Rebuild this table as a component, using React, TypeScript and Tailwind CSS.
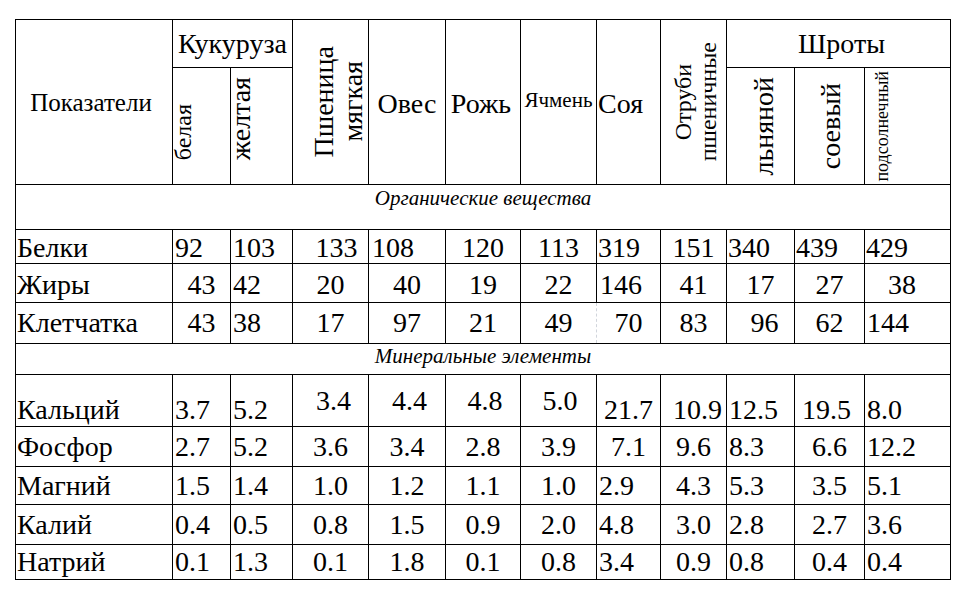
const B = "border border-black p-0";
const L = "justify-start pl-[2px]";
const C = "justify-center";

type Cell = { v: string; j: string; va?: string; td?: string };
type Row = { label: string; h: string; pad?: string; va: string; cells: Cell[] };

const colWidths = [
	"w-[157px]",
	"w-[58px]",
	"w-[62px]",
	"w-[76px]",
	"w-[77px]",
	"w-[75px]",
	"w-[76px]",
	"w-[64px]",
	"w-[66px]",
	"w-[68px]",
	"w-[70px]",
	"w-[86px]",
];

const organic: Row[] = [
	{
		label: "Белки",
		h: "h-[33px]",
		pad: "pt-[3px]",
		va: "items-center",
		cells: [
			{ v: "92", j: L },
			{ v: "103", j: L },
			{ v: "133", j: "justify-center pl-[12px]" },
			{ v: "108", j: "justify-start pl-[3px]" },
			{ v: "120", j: C },
			{ v: "113", j: C },
			{ v: "319", j: "justify-start pl-[1px]" },
			{ v: "151", j: C },
			{ v: "340", j: "justify-start pl-[1px]" },
			{ v: "439", j: "justify-start pl-[1px]" },
			{ v: "429", j: "justify-start pl-[1px]" },
		],
	},
	{
		label: "Жиры",
		h: "h-[38px]",
		pad: "pt-[4px]",
		va: "items-center",
		cells: [
			{ v: "43", j: C },
			{ v: "42", j: L },
			{ v: "20", j: C },
			{ v: "40", j: C },
			{ v: "19", j: C },
			{ v: "22", j: C },
			{ v: "146", j: "justify-start pl-[3px]" },
			{ v: "41", j: C },
			{ v: "17", j: C },
			{ v: "27", j: C },
			{ v: "38", j: "justify-start pl-[23px]" },
		],
	},
	{
		label: "Клетчатка",
		h: "h-[40px]",
		va: "items-center",
		cells: [
			{ v: "43", j: C },
			{ v: "38", j: L },
			{ v: "17", j: C },
			{ v: "97", j: C },
			{ v: "21", j: C },
			{ v: "49", j: C, td: "border-r-0" },
			{ v: "70", j: C, td: "[border-left-style:dashed] border-l-gray-300" },
			{ v: "83", j: C },
			{ v: "96", j: "justify-center pl-[8px]" },
			{ v: "62", j: C },
			{ v: "144", j: L },
		],
	},
];

const minerals: Row[] = [
	{
		label: "Кальций",
		h: "h-[51px]",
		va: "items-end",
		cells: [
			{ v: "3.7", j: L },
			{ v: "5.2", j: L },
			{ v: "3.4", j: "justify-center pl-[6px]", va: "items-center" },
			{ v: "4.4", j: "justify-center pl-[5px]", va: "items-center" },
			{ v: "4.8", j: "justify-center pl-[4px]", va: "items-center" },
			{ v: "5.0", j: "justify-center pl-[3px]", va: "items-center" },
			{ v: "21.7", j: C },
			{ v: "10.9", j: "justify-end pr-[4px]" },
			{ v: "12.5", j: L },
			{ v: "19.5", j: "justify-end pr-[13px]" },
			{ v: "8.0", j: L },
		],
	},
	{
		label: "Фосфор",
		h: "h-[39px]",
		va: "items-center",
		cells: [
			{ v: "2.7", j: L },
			{ v: "5.2", j: L },
			{ v: "3.6", j: C },
			{ v: "3.4", j: C },
			{ v: "2.8", j: C },
			{ v: "3.9", j: C },
			{ v: "7.1", j: C },
			{ v: "9.6", j: C },
			{ v: "8.3", j: L },
			{ v: "6.6", j: C },
			{ v: "12.2", j: L },
		],
	},
	{
		label: "Магний",
		h: "h-[37px]",
		va: "items-center",
		cells: [
			{ v: "1.5", j: L },
			{ v: "1.4", j: L },
			{ v: "1.0", j: C },
			{ v: "1.2", j: C },
			{ v: "1.1", j: C },
			{ v: "1.0", j: C },
			{ v: "2.9", j: L },
			{ v: "4.3", j: C },
			{ v: "5.3", j: L },
			{ v: "3.5", j: C },
			{ v: "5.1", j: L },
		],
	},
	{
		label: "Калий",
		h: "h-[39px]",
		va: "items-center",
		cells: [
			{ v: "0.4", j: L },
			{ v: "0.5", j: L },
			{ v: "0.8", j: C },
			{ v: "1.5", j: C },
			{ v: "0.9", j: C },
			{ v: "2.0", j: C },
			{ v: "4.8", j: L },
			{ v: "3.0", j: C },
			{ v: "2.8", j: L },
			{ v: "2.7", j: C },
			{ v: "3.6", j: L },
		],
	},
	{
		label: "Натрий",
		h: "h-[34px]",
		va: "items-center",
		cells: [
			{ v: "0.1", j: L },
			{ v: "1.3", j: L },
			{ v: "0.1", j: C },
			{ v: "1.8", j: C },
			{ v: "0.1", j: C },
			{ v: "0.8", j: C },
			{ v: "3.4", j: L },
			{ v: "0.9", j: C },
			{ v: "0.8", j: L },
			{ v: "0.4", j: C },
			{ v: "0.4", j: L },
		],
	},
];

const vertical = "[writing-mode:vertical-rl] rotate-180 text-center";

function DataRow({ row }: { row: Row }) {
	return (
		<tr>
			<td className={B}>
				<div className={`flex ${row.h} ${row.va} ${row.pad ?? ""} justify-start pl-[1px]`}>
					{row.label}
				</div>
			</td>
			{row.cells.map((c, i) => (
				<td key={i} className={`${B} ${c.td ?? ""}`}>
					<div className={`flex ${row.h} ${c.va ?? row.va} ${row.pad ?? ""} ${c.j}`}>{c.v}</div>
				</td>
			))}
		</tr>
	);
}

function SectionRow({ title, h }: { title: string; h: string }) {
	return (
		<tr>
			<td colSpan={12} className={B}>
				<div className={`flex ${h} items-start justify-center italic text-[21px] leading-[24px]`}>
					{title}
				</div>
			</td>
		</tr>
	);
}

export default function App() {
	return (
		<div className="min-h-[594px] w-[970px] bg-white pt-[19px] pl-[15px]">
			<table className="table-fixed border-collapse w-[936px] [font-family:'Liberation_Serif',serif] text-black text-[28px] leading-[32px]">
				<colgroup>
					{colWidths.map((w, i) => (
						<col key={i} className={w} />
					))}
				</colgroup>
				<tbody>
					<tr>
						<td rowSpan={2} className={B}>
							<div className="flex h-[164px] items-center justify-center pr-[6px] text-[25px] leading-[29px]">
								Показатели
							</div>
						</td>
						<td colSpan={2} className={B}>
							<div className="flex h-[47px] items-center justify-center">Кукуруза</div>
						</td>
						<td rowSpan={2} className={B}>
							<div className="flex h-[164px] items-center justify-start pl-[16px]">
								<span className={`${vertical} leading-[29px]`}>
									Пшеница
									<br />
									мягкая
								</span>
							</div>
						</td>
						<td rowSpan={2} className={B}>
							<div className="flex h-[164px] items-center justify-center pt-[4px]">Овес</div>
						</td>
						<td rowSpan={2} className={B}>
							<div className="flex h-[164px] items-center justify-center pt-[4px] pr-[4px]">Рожь</div>
						</td>
						<td rowSpan={2} className={B}>
							<div className="flex h-[164px] items-center justify-center pb-[4px] text-[21px] leading-[24px]">
								Ячмень
							</div>
						</td>
						<td rowSpan={2} className={B}>
							<div className="flex h-[164px] items-center justify-start pl-[1px] pt-[4px]">Соя</div>
						</td>
						<td rowSpan={2} className={B}>
							<div className="flex h-[164px] items-center justify-start pl-[10px]">
								<span className={`${vertical} text-[24px] leading-[25px]`}>
									Отруби
									<br />
									пшеничные
								</span>
							</div>
						</td>
						<td colSpan={3} className={B}>
							<div className="flex h-[47px] items-center justify-center pl-[6px]">Шроты</div>
						</td>
					</tr>
					<tr>
						<td className={B}>
							<div className="flex h-[116px] items-end justify-start pb-[24px]">
								<span className={`${vertical} text-[24px] leading-[20px]`}>белая</span>
							</div>
						</td>
						<td className={B}>
							<div className="flex h-[116px] items-end justify-start pb-[24px]">
								<span className={`${vertical} leading-[20px]`}>желтая</span>
							</div>
						</td>
						<td className={B}>
							<div className="flex h-[116px] items-center justify-start pl-[23px]">
								<span className={`${vertical} leading-[28px]`}>льняной</span>
							</div>
						</td>
						<td className={B}>
							<div className="flex h-[116px] items-center justify-start pl-[22px]">
								<span className={`${vertical} leading-[28px]`}>соевый</span>
							</div>
						</td>
						<td className={B}>
							<div className="flex h-[116px] items-center justify-start pl-[8px]">
								<span className={`${vertical} text-[18px] leading-[18px]`}>подсолнечный</span>
							</div>
						</td>
					</tr>
					<SectionRow title="Органические вещества" h="h-[44px] pt-[1px]" />
					{organic.map((r) => (
						<DataRow key={r.label} row={r} />
					))}
					<SectionRow title="Минеральные элементы" h="h-[30px]" />
					{minerals.map((r) => (
						<DataRow key={r.label} row={r} />
					))}
				</tbody>
			</table>
		</div>
	);
}
